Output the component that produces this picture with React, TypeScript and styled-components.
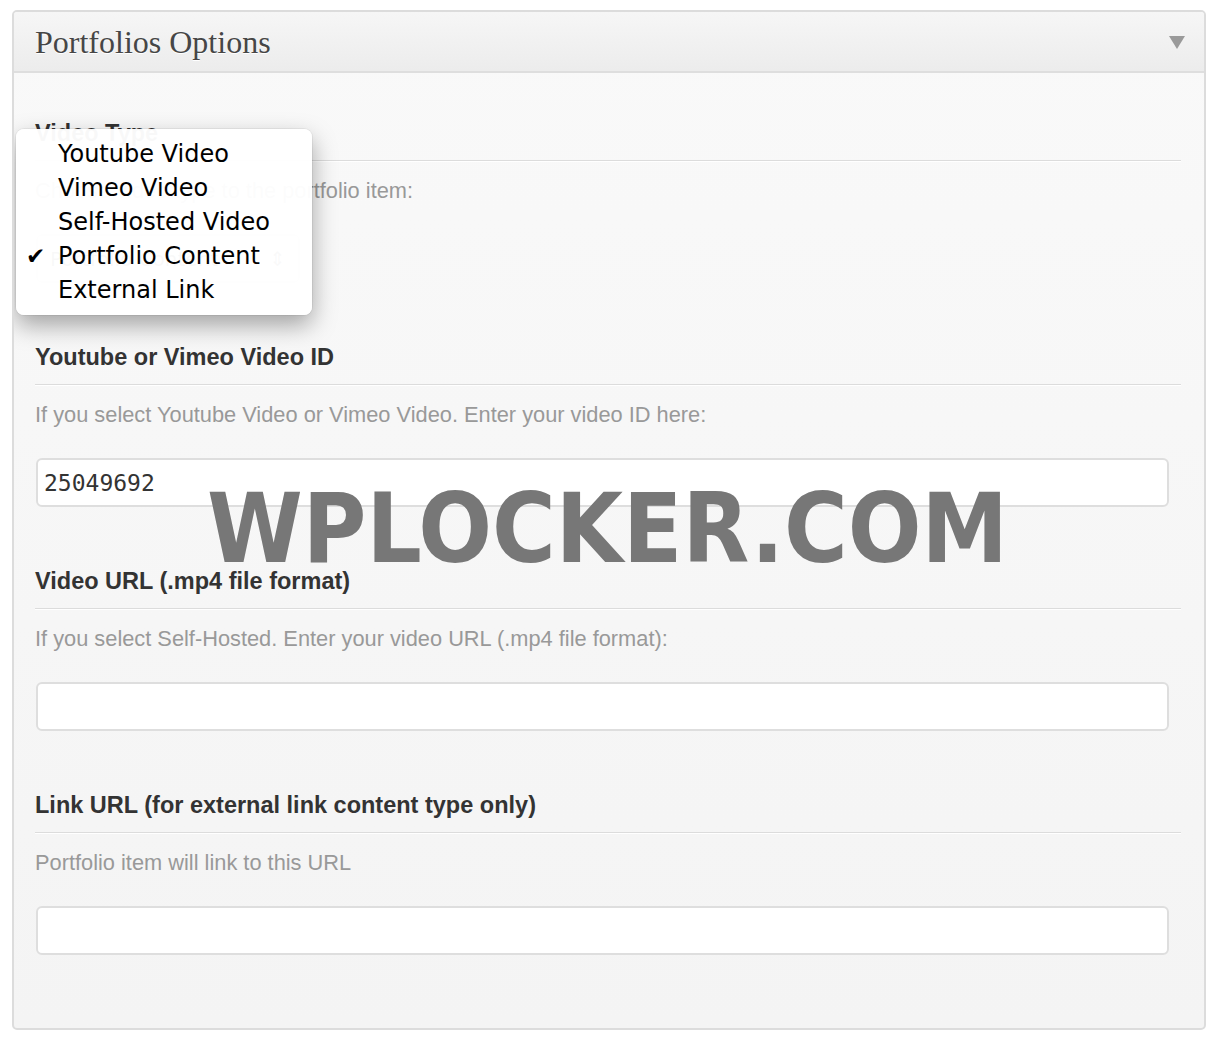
import React from 'react';
import styled, {createGlobalStyle} from 'styled-components';

const GlobalStyle = createGlobalStyle`
    * {
        box-sizing: border-box;
    }

    body {
        margin: 0;
        background: #fff;
        font-family: "Liberation Sans", Arial, sans-serif;
    }
`;

type Field = {
    title: string;
    description: string;
    value?: string;
};

const fields: Field[] = [
    {
        title: 'Youtube or Vimeo Video ID',
        description: 'If you select Youtube Video or Vimeo Video. Enter your video ID here:',
        value: '25049692',
    },
    {
        title: 'Video URL (.mp4 file format)',
        description: 'If you select Self-Hosted. Enter your video URL (.mp4 file format):',
    },
    {
        title: 'Link URL (for external link content type only)',
        description: 'Portfolio item will link to this URL',
    },
];

const menuItems = ['Youtube Video', 'Vimeo Video', 'Self-Hosted Video', 'Portfolio Content', 'External Link'];
const selected = 'Portfolio Content';

const App: React.FC = () => {
    return (
        <>
            <GlobalStyle/>
            <Panel>
                <Header>
                    <Title>Portfolios Options</Title>
                    <Toggle/>
                </Header>

                <Body>
                    <Section>
                        <Heading>Video Type</Heading>
                        <Rule/>
                        <Description>Choose video type to the portfolio item:</Description>
                        <SelectBox>
                            Portfolio Content
                            <Arrows>⇕</Arrows>
                        </SelectBox>

                        <Menu>
                            {menuItems.map(item => (
                                <MenuItem key={item}>
                                    <Check>{item === selected ? '✔' : ''}</Check>
                                    {item}
                                </MenuItem>
                            ))}
                        </Menu>
                    </Section>

                    {fields.map(field => (
                        <Section key={field.title}>
                            <Heading>{field.title}</Heading>
                            <Rule/>
                            <Description>{field.description}</Description>
                            <Input readOnly value={field.value ?? ''}/>
                        </Section>
                    ))}

                    <Watermark>WPLOCKER.COM</Watermark>
                </Body>
            </Panel>
        </>
    );
};

export default App;

const Panel = styled.div`
    margin: 10px 0 0 12px;
    width: 1194px;
    height: 1020px;
    border: 2px solid #dcdcdc;
    border-radius: 5px;
    overflow: hidden;
    background: linear-gradient(#f9f9f9, #f4f4f4);
    display: flex;
    flex-direction: column;
`;

const Header = styled.div`
    height: 61px;
    flex-shrink: 0;
    display: flex;
    align-items: center;
    justify-content: space-between;
    padding: 0 19px 0 21px;
    background: linear-gradient(#f6f6f6, #ececec);
    border-bottom: 2px solid #dedede;
`;

const Title = styled.h2`
    margin: 0;
    font-family: "Liberation Serif", "Times New Roman", serif;
    font-weight: normal;
    font-size: 32px;
    color: #464646;
    text-shadow: 0 1px 0 #fff;
    line-height: 1;
    padding-top: 1px;
`;

const Toggle = styled.span`
    width: 0;
    height: 0;
    border-left: 8px solid transparent;
    border-right: 8px solid transparent;
    border-top: 13px solid #9a9a9a;
    margin-top: 1px;
`;

const Body = styled.div`
    position: relative;
    flex: 1;
    padding: 47px 23px 0 21px;
    display: flex;
    flex-direction: column;
    gap: 61px;
`;

const Section = styled.div`
    position: relative;
    display: flex;
    flex-direction: column;
`;

const Heading = styled.h3`
    margin: 0;
    font-size: 23.5px;
    line-height: 26px;
    font-weight: bold;
    color: #333;
`;

const Rule = styled.div`
    margin-top: 14px;
    height: 0;
    border-top: 1px solid #dcdcdc;
    border-bottom: 1px solid #fff;
    box-sizing: content-box;
`;

const Description = styled.p`
    margin: 17px 0 0;
    font-size: 21.8px;
    line-height: 24px;
    color: #999;
`;

const Input = styled.input`
    margin: 31px 0 0 1px;
    width: 1133px;
    height: 49px;
    border: 2px solid #dedede;
    border-radius: 6px;
    background: #fff;
    padding: 0 6px;
    font-family: "DejaVu Sans Mono", "Liberation Mono", monospace;
    font-size: 23px;
    color: #333;
    outline: none;
`;

const SelectBox = styled.div`
    margin: 31px 0 0 1px;
    width: 264px;
    height: 49px;
    border: 2px solid #dedede;
    border-radius: 6px;
    background: #fff;
    display: flex;
    align-items: center;
    justify-content: space-between;
    padding: 0 12px;
    font-family: "DejaVu Sans", sans-serif;
    font-size: 20px;
    color: #333;
`;

const Arrows = styled.span`
    font-size: 20px;
    color: #555;
`;

const Menu = styled.ul`
    position: absolute;
    left: -19px;
    top: 9px;
    width: 296px;
    margin: 0;
    padding: 8px 0;
    list-style: none;
    background: rgba(255, 255, 255, 0.97);
    border-radius: 8px;
    box-shadow: 0 10px 24px rgba(0, 0, 0, 0.35), 0 0 0 1px rgba(0, 0, 0, 0.05);
    z-index: 2;
`;

const MenuItem = styled.li`
    display: flex;
    align-items: center;
    height: 34px;
    font-family: "DejaVu Sans", "Lucida Grande", sans-serif;
    font-size: 24px;
    color: #000;
`;

const Check = styled.span`
    width: 42px;
    padding-left: 10px;
    font-size: 23px;
    line-height: 1;
`;

const Watermark = styled.div`
    position: absolute;
    left: 193px;
    top: 408px;
    font-family: "DejaVu Sans Condensed", "DejaVu Sans", sans-serif;
    font-stretch: condensed;
    font-weight: bold;
    font-size: 96.5px;
    line-height: 1;
    color: #777;
    pointer-events: none;
    white-space: nowrap;
`;
